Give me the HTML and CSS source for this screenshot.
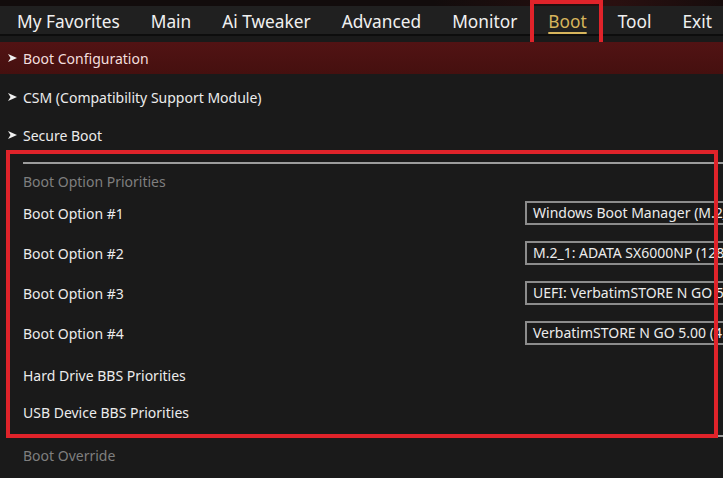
FILE: index.html
```html
<!DOCTYPE html>
<html lang="en">
<head>
  <meta charset="UTF-8">
  <title>UEFI BIOS Utility - Boot</title>
  <link rel="stylesheet" href="styles.css">
</head>
<body>
  <div class="top-strip"></div>

  <!-- menu tabs -->
  <nav class="tabs">
    <span class="tab">My Favorites</span>
    <span class="tab">Main</span>
    <span class="tab">Ai Tweaker</span>
    <span class="tab">Advanced</span>
    <span class="tab">Monitor</span>
    <span class="tab active">Boot</span>
    <span class="tab">Tool</span>
    <span class="tab">Exit</span>
  </nav>

  <div class="content">
    <div class="row sub active">
      <svg class="arrow" viewBox="0 0 9 8"><polygon points="0,0 9,4 0,8 2.5,4"/></svg>
      Boot Configuration
    </div>
    <div class="row sub">
      <svg class="arrow" viewBox="0 0 9 8"><polygon points="0,0 9,4 0,8 2.5,4"/></svg>
      CSM (Compatibility Support Module)
    </div>
    <div class="row sub">
      <svg class="arrow" viewBox="0 0 9 8"><polygon points="0,0 9,4 0,8 2.5,4"/></svg>
      Secure Boot
    </div>

    <div class="group">
      <div class="heading">Boot Option Priorities</div>
      <div class="option">
        <span class="label">Boot Option #1</span>
        <span class="select">Windows Boot Manager (M.2_1: ADATA SX6000NP)</span>
      </div>
      <div class="option">
        <span class="label">Boot Option #2</span>
        <span class="select">M.2_1: ADATA SX6000NP (128GB)</span>
      </div>
      <div class="option">
        <span class="label">Boot Option #3</span>
        <span class="select">UEFI: VerbatimSTORE N GO 5.00 (4.0)</span>
      </div>
      <div class="option">
        <span class="label">Boot Option #4</span>
        <span class="select">VerbatimSTORE N GO 5.00 (4.0)</span>
      </div>
      <div class="row plain first">Hard Drive BBS Priorities</div>
      <div class="row plain last">USB Device BBS Priorities</div>
    </div>

    <div class="group next">
      <div class="heading override">Boot Override</div>
    </div>

    <!-- red annotation box -->
    <div class="mark"></div>
  </div>
</body>
</html>
```

FILE: styles.css
```css
/* page */
body {
  margin: 0;
  background-color: #1a1a1a;
  font-family: "Noto Sans", "Open Sans", sans-serif;
  color: #ececec;
  overflow: hidden;
}

.top-strip {
  height: 6px;
  background: linear-gradient(to right, #120c0c 60%, #2a1010 85%, #160c0c);
}

/* tabs */
.tabs {
  display: flex;
  gap: 31px;
  height: 28px;
  padding-left: 17px;
  background-color: #202020;
  border-bottom: 2px solid #0d0d0d;
  margin-bottom: 6px;
  font-size: 17.3px;
  line-height: 31px;
  color: #f0f0f0;
}

.tab {
  position: relative;
  white-space: nowrap;
}

.tab.active {
  color: #d7b55c;
  text-decoration: underline;
  text-decoration-thickness: 2px;
  text-underline-offset: 4px;
}

.tab.active::after {
  content: "";
  position: absolute;
  left: -18px;
  right: -16px;
  top: -6px;
  height: 39px;
  border: 4px solid #e0232a;
}

/* content */
.content {
  position: relative;
  font-size: 14px;
}

.row {
  display: flex;
  align-items: center;
  height: 38px;
  padding-left: 23px;
  white-space: nowrap;
}

.row.sub {
  position: relative;
}

.row.sub.active {
  height: 32px;
  margin: 0 0 4px;
  background: linear-gradient(to bottom, #521314, #45100f);
  color: #f3dede;
}

.arrow {
  position: absolute;
  left: 8px;
  width: 9px;
  height: 8px;
  fill: #f0f0f0;
}

.group {
  margin-left: 23px;
  margin-top: 8px;
  border-top: 2px solid #9c9c9c;
}

.group.next {
  margin-top: 0;
}

.heading {
  color: #7f7f7f;
  line-height: 20px;
  margin: 8px 0 1px;
}

.heading.override {
  margin-top: 9px;
}

.option {
  display: flex;
  align-items: center;
  height: 40px;
  white-space: nowrap;
}

.label {
  width: 502px;
}

.select {
  box-sizing: border-box;
  height: 24px;
  line-height: 20px;
  padding: 0 6px;
  border: 2px solid #8c8c8c;
  border-right: none;
  flex: 1;
  overflow: hidden;
}

.row.plain {
  padding-left: 0;
  height: 37px;
}

.row.plain.first {
  margin-top: 4px;
}

.row.plain.last {
  margin-bottom: 4px;
}

.mark {
  position: absolute;
  left: 6px;
  top: 108px;
  width: 704px;
  height: 280px;
  border: 4px solid #e0232a;
}
```
